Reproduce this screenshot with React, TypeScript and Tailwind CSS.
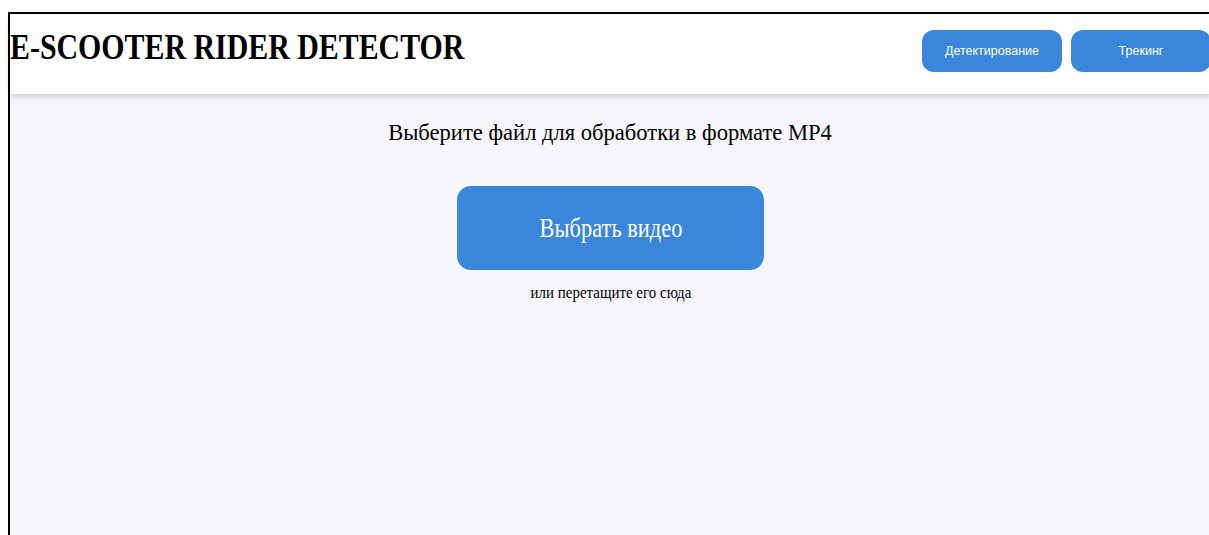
import React from "react";

const serif = "font-['Liberation_Serif','Times_New_Roman',serif]";
const sans = "font-['Liberation_Sans',Arial,sans-serif]";

function NavButton({ label }: { label: string }) {
  return (
    <button
      type="button"
      className={`${sans} flex h-[42px] w-[140px] items-center justify-center rounded-[12px] bg-[#3a86da] text-[12.5px] text-white`}
    >
      {label}
    </button>
  );
}

export default function App() {
  return (
    <div className="h-[535px] w-full overflow-hidden bg-white pl-[8px] pt-[12px]">
      <div className="h-full w-[1203px] border-l-2 border-t-2 border-black bg-[#f5f5fa]">
        <header className="flex h-[80px] items-start justify-between bg-white shadow-[0_2px_6px_rgba(0,0,0,0.18)]">
          <h1
            className={`${serif} mt-[12px] origin-left scale-x-[0.83] whitespace-nowrap text-[36px] font-bold leading-[42px] text-black`}
          >
            E-SCOOTER RIDER DETECTOR
          </h1>
          <nav className="mt-[16px] flex gap-[9px]">
            <NavButton label="Детектирование" />
            <NavButton label="Трекинг" />
          </nav>
        </header>

        <main className={`${serif} flex flex-col items-center text-black`}>
          <p className="mt-[24px] inline-block scale-x-[0.94] whitespace-nowrap text-[24px] leading-[28px]">
            Выберите файл для обработки в формате MP4
          </p>
          <button
            type="button"
            className="mt-[40px] flex h-[84px] w-[307px] items-center justify-center rounded-[14px] bg-[#3a86da] text-white"
          >
            <span className="inline-block scale-x-[0.83] text-[27px]">Выбрать видео</span>
          </button>
          <p className="mt-[14px] inline-block scale-x-[0.935] whitespace-nowrap text-[16px] leading-[18px]">
            или перетащите его сюда
          </p>
        </main>
      </div>
    </div>
  );
}
